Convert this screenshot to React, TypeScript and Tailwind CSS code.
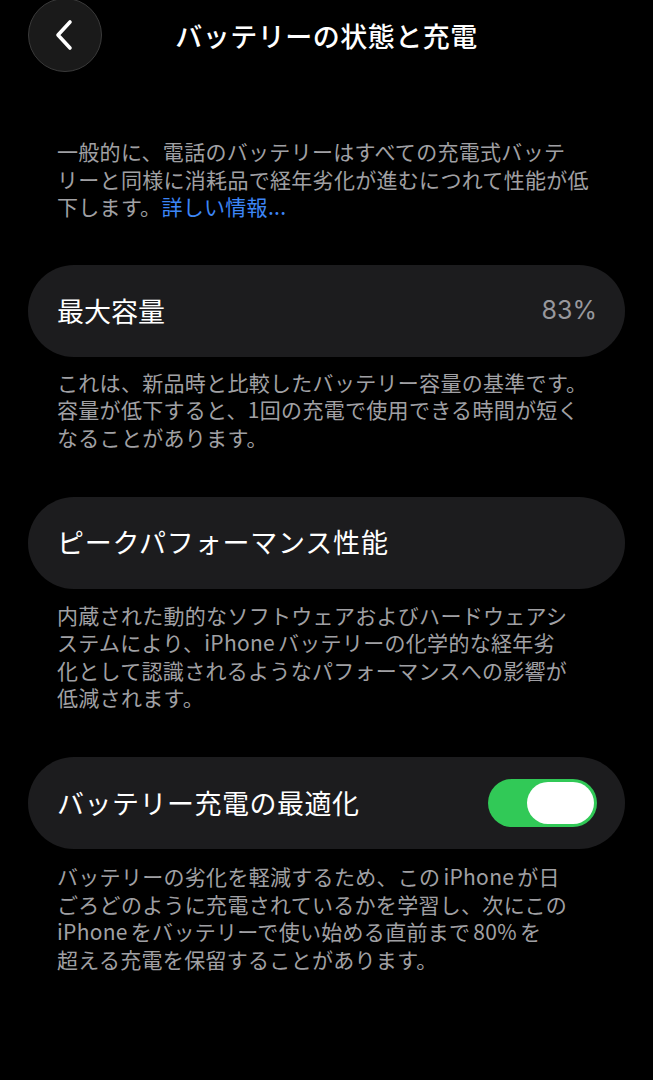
import React from 'react';

const jp = { fontFamily: '"Noto Sans CJK JP", "Noto Sans", sans-serif' };

function Note({ lines, link }: { lines: React.ReactNode[]; link?: string }) {
  return (
    <div className="px-[57px] text-[21px] leading-[27.6px] tracking-[0.3px] text-[#a0a0a4] whitespace-nowrap">
      {lines.map((l, i) => (
        <div key={i}>
          {l}
          {link && i === lines.length - 1 && <span className="text-[#3d86f6]">{link}</span>}
        </div>
      ))}
    </div>
  );
}

function Row({ children }: { children: React.ReactNode }) {
  return (
    <div className="mx-[28px] h-[92px] rounded-full bg-[#1c1c1e] flex items-center justify-between pl-[29px] pr-[28px]">
      {children}
    </div>
  );
}

const sp = <span className="inline-block w-[3px]" />;

export default function App() {
  return (
    <div className="w-[653px] h-[1080px] bg-black text-white overflow-hidden" style={jp}>
      <div className="relative h-[72px] flex items-center justify-center">
        <button className="absolute left-[28px] top-[-2px] w-[74px] h-[74px] rounded-full bg-[#1a1a1a] border border-[#3a3a3a] flex items-center justify-center">
          <svg width="22" height="32" viewBox="0 0 22 32" fill="none">
            <path d="M16 3 L4 16 L16 29" stroke="white" strokeWidth="3.6" strokeLinecap="round" strokeLinejoin="round" />
          </svg>
        </button>
        <h1 className="text-[27px] font-medium tracking-[0.5px]">バッテリーの状態と充電</h1>
      </div>

      <div className="pt-[66px]">
        <Note
          lines={[
            '一般的に、電話のバッテリーはすべての充電式バッテ',
            'リーと同様に消耗品で経年劣化が進むにつれて性能が低',
            '下します。',
          ]}
          link="詳しい情報..."
        />
      </div>

      <div className="mt-[44px]">
        <Row>
          <span className="text-[27px]">最大容量</span>
          <span className="text-[25px] text-[#98989d]" style={{ fontFamily: 'Inter, "Noto Sans", sans-serif' }}>
            83%
          </span>
        </Row>
      </div>

      <div className="mt-[12px]">
        <Note
          lines={[
            'これは、新品時と比較したバッテリー容量の基準です。',
            '容量が低下すると、1回の充電で使用できる時間が短く',
            'なることがあります。',
          ]}
        />
      </div>

      <div className="mt-[45px]">
        <Row>
          <span className="text-[27px] tracking-[0.8px]">ピークパフォーマンス性能</span>
        </Row>
      </div>

      <div className="mt-[13px]">
        <Note
          lines={[
            '内蔵された動的なソフトウェアおよびハードウェアシ',
            <>ステムにより、iPhone{sp}バッテリーの化学的な経年劣</>,
            '化として認識されるようなパフォーマンスへの影響が',
            '低減されます。',
          ]}
        />
      </div>

      <div className="mt-[45px]">
        <Row>
          <span className="text-[27px] tracking-[0.5px]">バッテリー充電の最適化</span>
          <div className="w-[109px] h-[48px] rounded-full bg-[#31c957] flex items-center justify-end pr-[3px]">
            <div className="w-[67px] h-[42px] rounded-full bg-white" />
          </div>
        </Row>
      </div>

      <div className="mt-[14px]">
        <Note
          lines={[
            <>バッテリーの劣化を軽減するため、この{sp}iPhone{sp}が日</>,
            'ごろどのように充電されているかを学習し、次にこの',
            <>iPhone{sp}をバッテリーで使い始める直前まで{sp}80%{sp}を</>,
            '超える充電を保留することがあります。',
          ]}
        />
      </div>
    </div>
  );
}
